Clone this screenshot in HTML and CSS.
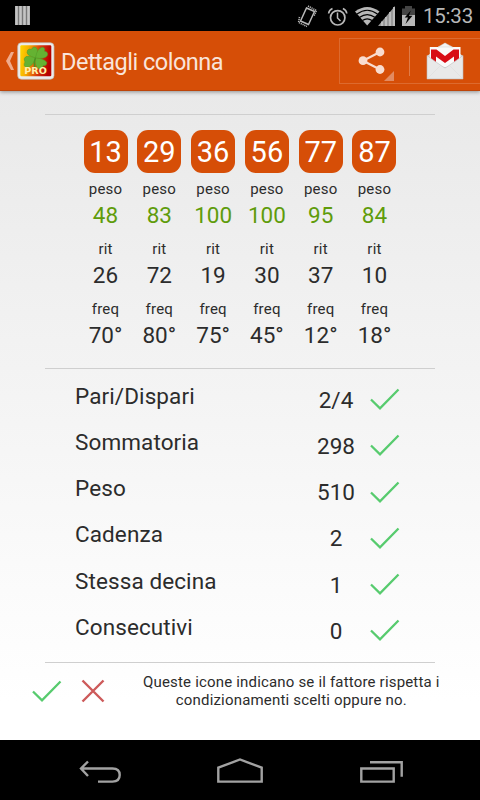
FILE: index.html
```html
<!DOCTYPE html>
<html lang="it">

<head>
    <meta charset="UTF-8">
    <meta name="viewport" content="width=device-width, initial-scale=1.0">
    <title>Dettagli colonna</title>
    <link rel="stylesheet" href="styles.css">
</head>

<body>
    <!-- Shared icons -->
    <svg class="defs" width="0" height="0">
        <symbol id="check" viewBox="0 0 32 24">
            <path d="M2 12.5 L11 21.3 L29.5 2.5" fill="none" stroke="#57cb6e" stroke-width="2.3" />
        </symbol>
    </svg>

    <!-- Status bar -->
    <div class="status-bar">
        <svg class="status-left" width="16" height="20" viewBox="0 0 16 20">
            <path d="M0 0H15V19H0Z" fill="#777" />
            <path d="M1.5 0V19M5.5 0V19M9.5 0V19M13.5 0V19" stroke="#c4c4c4" stroke-width="2.6" />
        </svg>
        <svg class="status-icons" width="120" height="24" viewBox="296 3 120 24">
            <g fill="none" stroke="#b8b8b8">
                <path d="M306.5 7L314.5 10.5L308.5 23.5L300.5 20Z" stroke-width="1.5" />
                <path d="M308 5L316.5 9.5L314 15M299.5 16L298.5 21.5L307 25.5" stroke-width="1.5" stroke-dasharray="1.2 .8" />
                <circle cx="337.7" cy="16.8" r="7.2" stroke-width="1.7" />
                <path d="M337.5 11.5V17L340.5 20" stroke-width="1.5" />
                <path d="M328.6 12.5Q329 9 332.5 7.5M346.8 12.5Q346.4 9 342.9 7.5" stroke-width="1.6" />
            </g>
            <path d="M355 10.5Q367.2 1.5 379.5 10.5L367.2 24.5Z" fill="#b8b8b8" />
            <path d="M357 13Q367.2 5.5 377.5 13M359.7 16.3Q367.2 10.8 374.8 16.3M362.4 19.6Q367.2 16 372 19.6" fill="none" stroke="#000" stroke-width="1.2" />
            <path d="M378 25L395 5V25Z" fill="#999" />
            <path d="M382 25V20.5M386 25V16M390 25V11M394 25V6" stroke="#c2c2c2" stroke-width="1.7" />
            <path d="M402 7.5H405V5H412V7.5H415V14H402Z" fill="#444" />
            <path d="M402 14H415V25H402Z" fill="#b8b8b8" />
            <path d="M410.8 9.5L404.7 16.5H408L405.5 23L412.5 14.8H409Z" fill="#000" />
        </svg>
        <span class="clock">15:33</span>
    </div>

    <!-- Action bar -->
    <div class="action-bar">
        <svg class="back" width="10" height="20" viewBox="0 0 10 20">
            <path d="M6 1H9L5 10L9 19H6L1 10Z" fill="#f0ab8c" />
        </svg>
        <svg class="app-logo" width="38" height="38" viewBox="0 0 38 38">
            <defs>
                <linearGradient id="flag" x2="1" y2=".15">
                    <stop offset="0" stop-color="#ffd900" />
                    <stop offset=".28" stop-color="#f7b000" />
                    <stop offset=".65" stop-color="#d93a0c" />
                    <stop offset="1" stop-color="#b50000" />
                </linearGradient>
            </defs>
            <rect x=".7" y=".7" width="36.3" height="36.6" rx="3.8" fill="#ececec" stroke="#bfb7b0" stroke-width=".7" />
            <rect x="3.3" y="3.3" width="31" height="31" rx="1.2" fill="url(#flag)" />
            <g fill="#65b232" stroke="#4f9c28" stroke-width=".5">
                <path d="M18.5 16Q8 13.5 10.5 8.3Q12 6.3 14.5 7.3Q16.5 3.5 19.7 6.2Q21.8 9.5 18.5 16Z" />
                <path d="M18.5 16Q20 6.5 25 5.2Q28.5 5.3 27.5 9.2Q31.8 10 30.2 13.8Q27.2 17.5 18.5 16Z" />
                <path d="M18.5 16Q13.5 13.5 9 14.5Q5.8 16.5 8 20Q5.8 23.7 9 25.3Q15.8 25.3 18.5 16Z" />
                <path d="M18.5 16Q27.5 16.5 29.8 20.5Q30 24 26.2 23.6Q25.2 28 21.3 26.5Q17.2 23.5 18.5 16Z" />
            </g>
            <path d="M18.5 16Q16.2 21 18.2 26.5" fill="none" stroke="#479323" stroke-width="1.5" />
            <text class="logo-text" x="7.3" y="32.3" textLength="22.5" lengthAdjust="spacingAndGlyphs">PRO</text>
        </svg>
        <h1>Dettagli colonna</h1>
        <div class="share-box">
            <svg class="share" width="69" height="44" viewBox="1 0 69 44">
                <path d="M41 13L24 21.7L41 30.5" fill="none" stroke="#f9dccf" stroke-width="2.2" />
                <g fill="#f9dccf">
                    <circle cx="24" cy="21.7" r="4.4" />
                    <circle cx="41" cy="13" r="4.4" />
                    <circle cx="41" cy="30.5" r="4.4" />
                </g>
                <path d="M55 32V42H45Z" fill="#e28b62" />
            </svg>
            <div class="share-target">
                <svg width="38" height="38" viewBox="0 0 38 38">
                    <path d="M1 14L19 1L37 14V37H1Z" fill="#d8d8d8" />
                    <path d="M3.8 5H34.5V25H3.8Z" fill="#fafafa" />
                    <path d="M12 5L19 1L26.5 5Z" fill="#f4f4f4" stroke="#ccc" stroke-width=".5" />
                    <path d="M5 21V7.5H10.5L19 14L27.5 7.5H33V21H28V14.5L19 21L10 14.5V21Z" fill="#d80d16" />
                    <path d="M1 13.5L5 16.5L10 20L15 23.5L19 26L23 23.5L28 20L33 16.5L37 13.5V37H1Z" fill="#e9e9e9" stroke="#bdbdbd" stroke-width=".6" />
                    <path d="M1.5 36.5L14 24M36.5 36.5L24 24" stroke="#dedede" stroke-width=".6" />
                </svg>
            </div>
        </div>
    </div>

    <main>
        <div class="numbers">
            <div class="number">
                <div class="ball">13</div>
                <dl><dt>peso</dt><dd class="weight">48</dd><dt>rit</dt><dd>26</dd><dt>freq</dt><dd>70°</dd></dl>
            </div>
            <div class="number">
                <div class="ball">29</div>
                <dl><dt>peso</dt><dd class="weight">83</dd><dt>rit</dt><dd>72</dd><dt>freq</dt><dd>80°</dd></dl>
            </div>
            <div class="number">
                <div class="ball">36</div>
                <dl><dt>peso</dt><dd class="weight">100</dd><dt>rit</dt><dd>19</dd><dt>freq</dt><dd>75°</dd></dl>
            </div>
            <div class="number">
                <div class="ball">56</div>
                <dl><dt>peso</dt><dd class="weight">100</dd><dt>rit</dt><dd>30</dd><dt>freq</dt><dd>45°</dd></dl>
            </div>
            <div class="number">
                <div class="ball">77</div>
                <dl><dt>peso</dt><dd class="weight">95</dd><dt>rit</dt><dd>37</dd><dt>freq</dt><dd>12°</dd></dl>
            </div>
            <div class="number">
                <div class="ball">87</div>
                <dl><dt>peso</dt><dd class="weight">84</dd><dt>rit</dt><dd>10</dd><dt>freq</dt><dd>18°</dd></dl>
            </div>
        </div>

        <div class="factors">
            <div class="factor"><span class="name">Pari/Dispari</span><span class="value">2/4</span><svg class="check"><use href="#check" /></svg></div>
            <div class="factor"><span class="name">Sommatoria</span><span class="value">298</span><svg class="check"><use href="#check" /></svg></div>
            <div class="factor"><span class="name">Peso</span><span class="value">510</span><svg class="check"><use href="#check" /></svg></div>
            <div class="factor"><span class="name">Cadenza</span><span class="value">2</span><svg class="check"><use href="#check" /></svg></div>
            <div class="factor"><span class="name">Stessa decina</span><span class="value">1</span><svg class="check"><use href="#check" /></svg></div>
            <div class="factor"><span class="name">Consecutivi</span><span class="value">0</span><svg class="check"><use href="#check" /></svg></div>
        </div>

        <div class="legend">
            <svg class="check"><use href="#check" /></svg>
            <svg class="cross" width="24" height="24" viewBox="0 0 24 24">
                <path d="M1.5 1.5L22.5 22.5M22.5 1.5L1.5 22.5" stroke="#cd5a5a" stroke-width="2.4" />
            </svg>
            <p>Queste icone indicano se il fattore rispetta i<br>condizionamenti scelti oppure no.</p>
        </div>
    </main>

    <!-- Navigation bar -->
    <div class="nav-bar">
        <svg width="480" height="60" viewBox="0 0 480 60" fill="none" stroke="#a2a2a2" stroke-width="2.4">
            <path d="M88 21.5L81 28.5L88 36M81 28.5H112.5Q119.7 28.5 119.7 35Q119.7 41.6 112.5 41.6H98" />
            <path d="M218.3 27.7L240 19.5L261.7 27.7V41.6H218.3Z" />
            <path d="M361.3 28.5H393.7V41.6H361.3ZM370 22.3H401.7V36.7" />
        </svg>
    </div>
</body>

</html>
```

FILE: styles.css
```css
* {
    box-sizing: border-box;
}

body {
    margin: 0;
    width: 480px;
    height: 800px;
    display: flex;
    flex-direction: column;
    overflow: hidden;
    background: #000;
    font-family: Roboto, "Noto Sans", sans-serif;
    color: #2c2c2c;
}

svg {
    display: block;
    flex: none;
}

.defs {
    position: absolute;
}

.status-bar {
    height: 31px;
    display: flex;
    align-items: center;
    padding: 0 7px 0 15px;
    background: #000;
}

.status-icons {
    margin-left: auto;
}

.clock {
    width: 51px;
    margin-left: 6px;
    padding-top: 2px;
    font-size: 20.5px;
    line-height: 31px;
    letter-spacing: -0.2px;
    color: #b8b8b8;
    text-align: right;
}

.action-bar {
    height: 60px;
    flex: none;
    display: flex;
    align-items: center;
    padding-left: 5px;
    background: #d64e07;
    border-bottom: 1px solid #bd4509;
    box-shadow: 0 1px 4px rgba(0, 0, 0, 0.4);
    z-index: 1;
}

.app-logo {
    margin-left: 2px;
}

.logo-text {
    font: bold 8px "DejaVu Sans", sans-serif;
    fill: #fff0a8;
}

h1 {
    margin: 2px 0 0 6px;
    font-size: 23.5px;
    font-weight: 400;
    line-height: 30px;
    letter-spacing: -0.5px;
    color: #f9e4da;
}

.share-box {
    width: 141px;
    height: 46px;
    margin-left: auto;
    display: flex;
    align-items: center;
    border: 1px solid #dd6a2e;
    border-right: none;
}

.share-target {
    height: 30px;
    display: flex;
    align-items: center;
    padding-left: 16px;
    border-left: 1px solid #e07c48;
}

main {
    flex: 1;
    padding: 23px 45px 0;
    background: linear-gradient(#e9e9e9, #fff 94%);
}

.numbers {
    height: 254px;
    display: grid;
    grid-template-columns: repeat(6, 53.8px);
    justify-content: center;
    padding-top: 15px;
    border-top: 1px solid #cfcfcf;
}

.number {
    text-align: center;
}

.ball {
    width: 44px;
    height: 43px;
    margin: 0 auto;
    border-radius: 11px;
    background: #d64e07;
    color: #fff;
    font-size: 29px;
    line-height: 44px;
}

dl {
    margin: 6px 0 0;
}

dt {
    height: 21px;
    font-size: 15px;
    line-height: 20px;
    letter-spacing: 0.2px;
}

dd {
    height: 39px;
    margin: 0;
    font-size: 22.5px;
    line-height: 31px;
}

.weight {
    color: #5f9c0b;
}

.factors {
    height: 295px;
    padding: 8.6px 34px 0 30px;
    border-top: 1px solid #cfcfcf;
    border-bottom: 1px solid #cfcfcf;
}

.factor {
    height: 46.3px;
    display: flex;
    font-size: 22.5px;
    line-height: 36px;
}

.name {
    flex: 1;
    letter-spacing: 0.1px;
}

.value {
    width: 60px;
    padding-top: 4px;
    text-align: center;
}

.check {
    width: 32px;
    height: 24px;
}

.factor .check {
    margin: 9.4px 0 0 3px;
}

.legend {
    display: flex;
    margin: 10px 0 0 -14px;
}

.legend .check {
    margin-top: 6px;
}

.cross {
    margin: 6px 0 0 18px;
}

.legend p {
    width: 310px;
    margin: 0 0 0 38px;
    font-size: 15px;
    line-height: 18px;
    letter-spacing: 0.18px;
    text-align: center;
    white-space: nowrap;
}

.nav-bar {
    height: 60px;
    flex: none;
    background: #000;
}
```
